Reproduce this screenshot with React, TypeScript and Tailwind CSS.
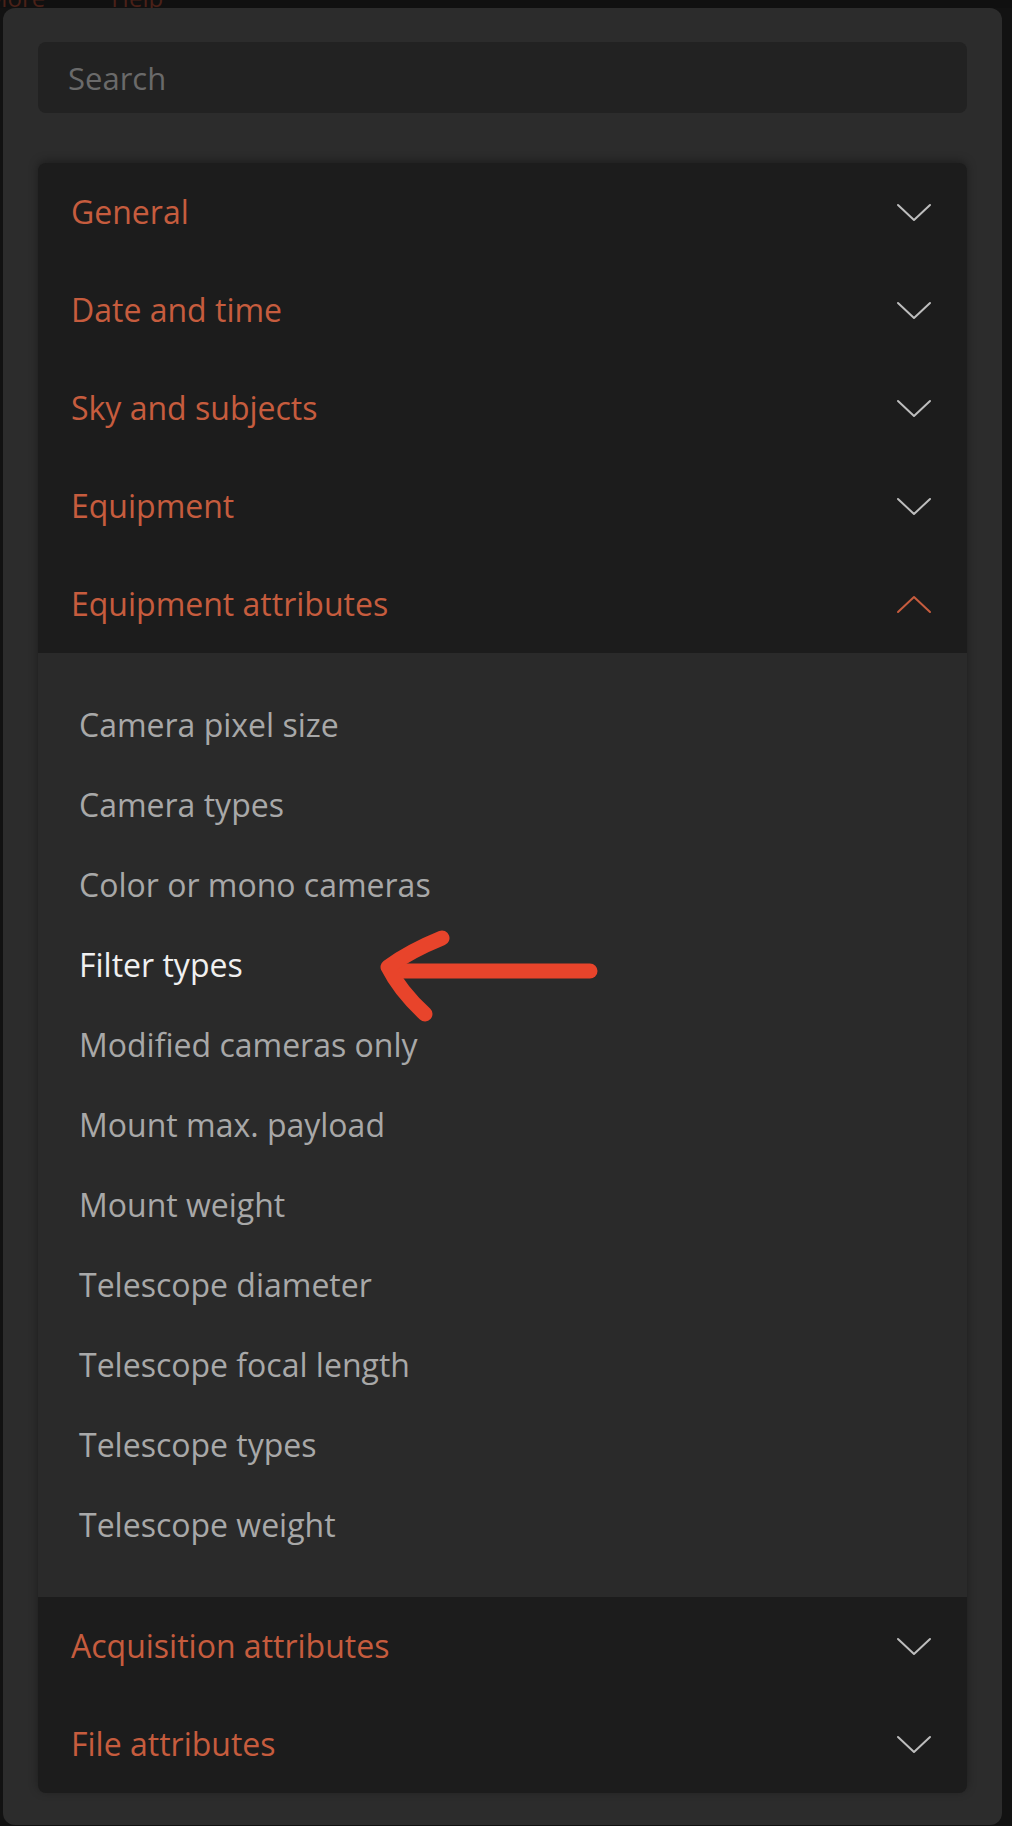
import { useState } from "react";

const sectionsTop = ["General", "Date and time", "Sky and subjects", "Equipment"];
const sectionsBottom = ["Acquisition attributes", "File attributes"];

const equipmentItems = [
  "Camera pixel size",
  "Camera types",
  "Color or mono cameras",
  "Filter types",
  "Modified cameras only",
  "Mount max. payload",
  "Mount weight",
  "Telescope diameter",
  "Telescope focal length",
  "Telescope types",
  "Telescope weight",
];

function Chevron({ up = false }: { up?: boolean }) {
  return (
    <svg width="36" height="19" viewBox="0 0 36 19" fill="none" className={up ? "text-[#c65c3e]" : "text-[#bdbdbd]"}>
      <polyline
        points={up ? "2,17 18,2 34,17" : "2,2 18,17 34,2"}
        stroke="currentColor"
        strokeWidth="2"
        strokeLinecap="round"
        strokeLinejoin="round"
      />
    </svg>
  );
}

function Header({ label, open = false }: { label: string; open?: boolean }) {
  return (
    <div className="h-[98px] flex items-center justify-between pl-[33px] pr-[35px]">
      <span className="text-[32px] text-[#c65c3e]">{label}</span>
      <Chevron up={open} />
    </div>
  );
}

// hand-drawn annotation pointing at "Filter types"
function Arrow() {
  return (
    <svg
      className="absolute left-[332px] top-[-4px] pointer-events-none"
      width="240"
      height="110"
      viewBox="0 0 240 110"
      fill="none"
    >
      <path d="M220 50 L24 50" stroke="#e8442b" strokeWidth="15" strokeLinecap="round" />
      <path
        d="M72 17 Q40 30 18 46 Q30 70 55 93"
        stroke="#e8442b"
        strokeWidth="15"
        strokeLinecap="round"
        strokeLinejoin="round"
      />
    </svg>
  );
}

export default function App() {
  const [query, setQuery] = useState("");
  return (
    <div className="w-[1012px] h-[1826px] bg-[#121212] overflow-hidden" style={{ fontFamily: "'Open Sans', sans-serif" }}>
      <div className="h-[8px] overflow-hidden bg-[#101010]">
        <div className="flex gap-[66px] -mt-[20px] -ml-[14px] text-[24px] text-[#4a2118]">
          <span>More</span>
          <span>Help</span>
        </div>
      </div>
      <div className="ml-[3px] w-[999px] rounded-[12px] bg-[#2c2c2c] pt-[34px] px-[35px] pb-[32px]">
        <input
          value={query}
          onChange={(e) => setQuery(e.target.value)}
          placeholder="Search"
          className="w-full h-[71px] rounded-[8px] bg-[#222222] px-[30px] text-[31px] text-[#d0d0d0] placeholder:text-[#6a6a6a] outline-none"
        />
        <div className="mt-[50px] rounded-[8px] bg-[#1c1c1c] overflow-hidden shadow-[0_-2px_10px_rgba(0,0,0,0.35)]">
          {sectionsTop.map((s) => (
            <Header key={s} label={s} />
          ))}
          <Header label="Equipment attributes" open />
          <div className="bg-[#2a2a2a] py-[32px]">
            {equipmentItems.map((item) => (
              <div key={item} className="relative h-[80px] flex items-center pl-[41px]">
                <span className={"text-[32px] " + (item === "Filter types" ? "text-[#f0f0f0]" : "text-[#a8a8a8]")}>
                  {item}
                </span>
                {item === "Filter types" && <Arrow />}
              </div>
            ))}
          </div>
          {sectionsBottom.map((s) => (
            <Header key={s} label={s} />
          ))}
        </div>
      </div>
    </div>
  );
}
